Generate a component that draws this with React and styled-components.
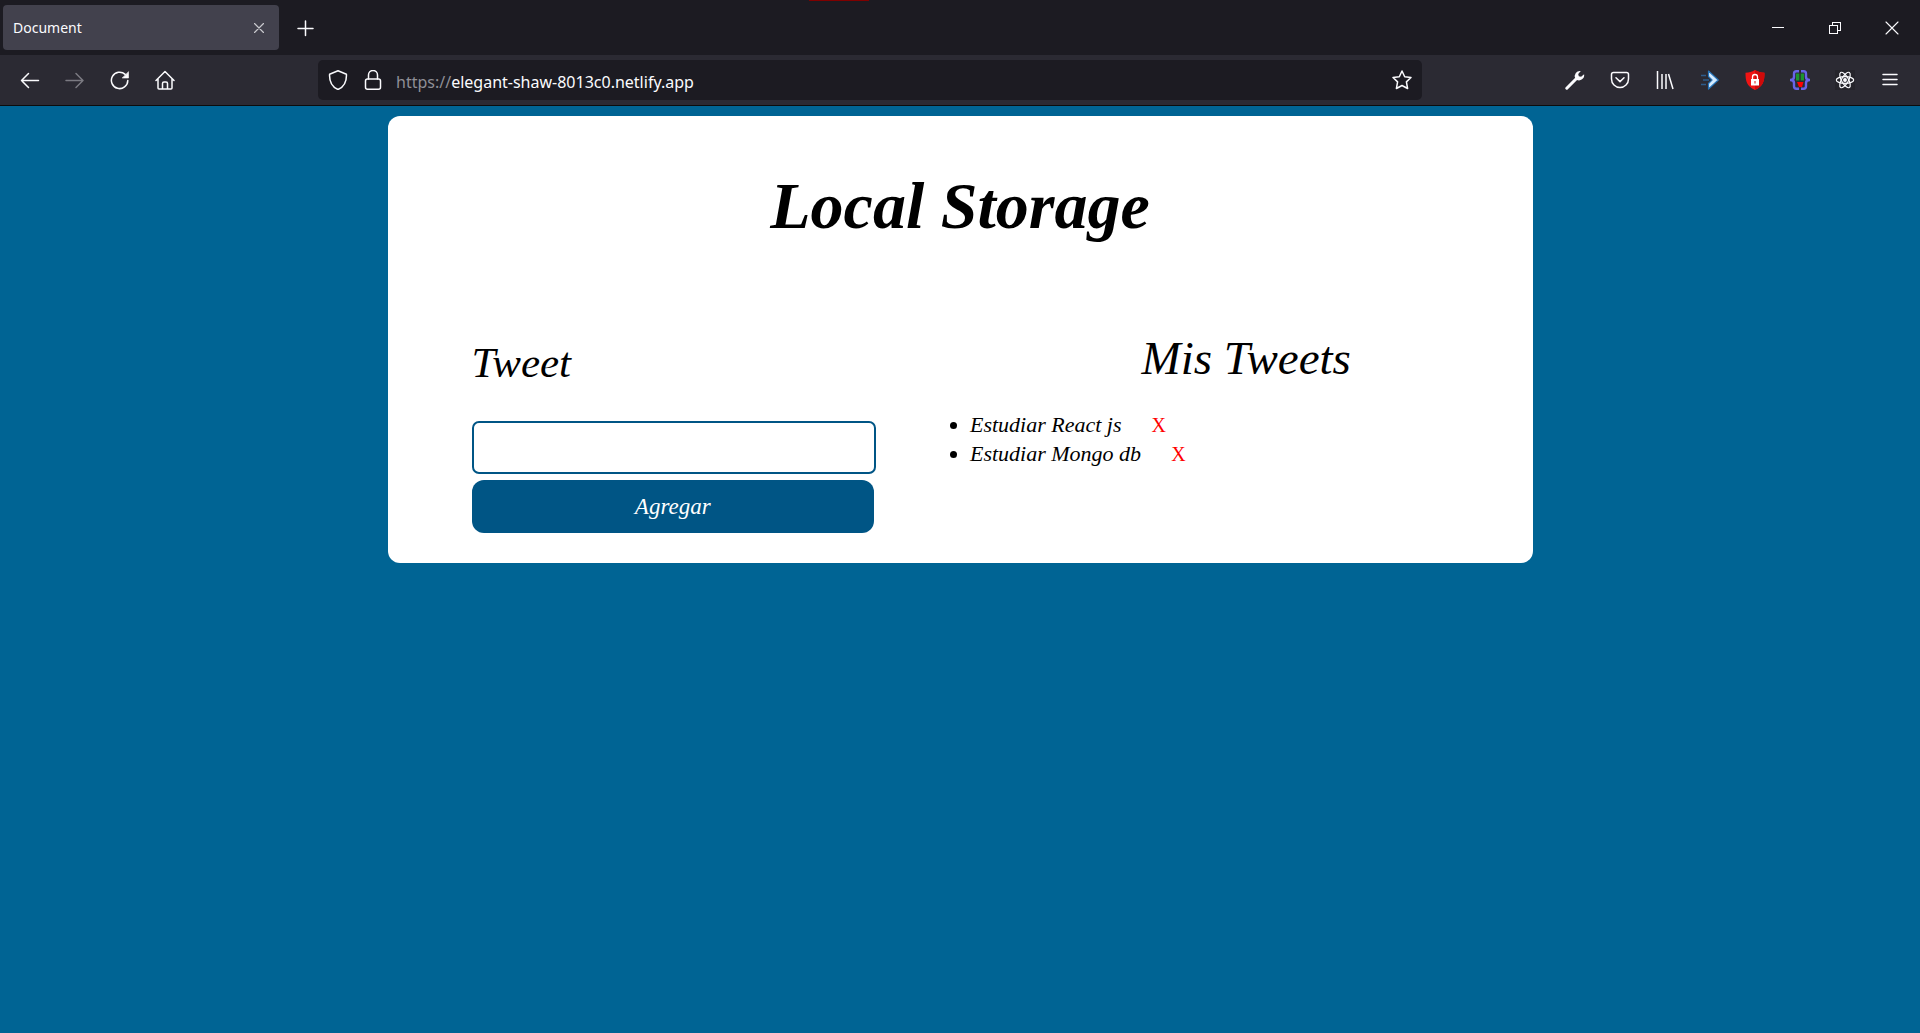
import React, { useState } from "react";
import styled, { createGlobalStyle, css } from "styled-components";

const ui = `"Noto Sans", "Open Sans", sans-serif`;
const serif = `"Liberation Serif", "Times New Roman", serif`;

const GlobalStyle = createGlobalStyle`
  *, *::before, *::after { box-sizing: border-box; }
  body {
    margin: 0;
    background: #006494;
    color: #000;
    font-family: ${serif};
  }
  button, input { font: inherit; }
`;

const Window = styled.div`
  display: flex;
  flex-direction: column;
  min-height: 100vh;
`;

const TitleBar = styled.header`
  position: relative;
  display: flex;
  align-items: flex-start;
  height: 55px;
  padding: 5px 0 5px 3px;
  background: #1c1b22;
  color: #fbfbfe;
  font-family: ${ui};
`;

const RecordingMark = styled.span`
  position: absolute;
  top: 0;
  left: 809px;
  width: 60px;
  height: 1px;
  background: #7f0000;
`;

const Tab = styled.div`
  display: flex;
  align-items: center;
  justify-content: space-between;
  width: 276px;
  height: 45px;
  padding: 0 10px;
  border-radius: 4px;
  background: #42414d;
  font-size: 14px;
`;

const IconButton = styled.button`
  display: flex;
  align-items: center;
  justify-content: center;
  flex: none;
  width: ${(p) => p.$width || 45}px;
  height: ${(p) => p.$height || 45}px;
  padding: 0;
  border: 0;
  background: none;
  color: ${(p) => (p.$dim ? "#7b7a82" : "#fbfbfe")};
`;

const WindowControls = styled.div`
  display: flex;
  margin-left: auto;
`;

const Toolbar = styled.nav`
  display: flex;
  align-items: center;
  justify-content: space-between;
  height: 51px;
  padding: 0 8px 0 7px;
  border-bottom: 1px solid #0c0c0d;
  background: #2b2a33;
  font-family: ${ui};
`;

const ToolGroup = styled.div`
  display: flex;
`;

const AddressBar = styled.div`
  display: flex;
  align-items: center;
  flex: 0 1 1104px;
  height: 40px;
  margin-left: auto;
  margin-right: 130px;
  border-radius: 5px;
  background: #1c1b22;
  color: #fbfbfe;
  font-size: 16px;
`;

const Scheme = styled.label`
  margin-left: 8px;
  padding-top: 3px;
  color: #8f8f96;
`;

const AddressInput = styled.input`
  flex: 1;
  min-width: 0;
  padding: 3px 0 0;
  border: 0;
  outline: 0;
  background: none;
  color: inherit;
`;

const Card = styled.main`
  width: calc(100% - 20px);
  max-width: 1145px;
  margin: 10px auto;
  padding-bottom: 30px;
  border-radius: 12px;
  background: #fff;
  font-style: italic;
`;

const Title = styled.h1`
  margin: 0;
  padding: 50px 0 80px;
  font-size: 66px;
  line-height: 80px;
  text-align: center;
`;

const Columns = styled.div`
  display: grid;
  grid-template-columns: 1fr 1fr;
`;

const heading = css`
  margin: 0;
  font-weight: 400;
  line-height: 50px;
`;

const Form = styled.form`
  display: flex;
  flex-direction: column;
  padding: 12px 84px 0;
`;

const FieldLabel = styled.label`
  ${heading}
  margin-bottom: 33px;
  font-size: 43px;
`;

const fieldBox = css`
  height: 53px;
  font-size: 23px;
  font-style: italic;
`;

const TweetInput = styled.input`
  ${fieldBox}
  padding: 0 12px;
  border: 2px solid #005585;
  border-radius: 7px;
  outline: 0;
  background: #fff;
`;

const SubmitButton = styled.button`
  ${fieldBox}
  margin: 6px 2px 0 0;
  border: 0;
  border-radius: 12px;
  background: #005585;
  color: #fff;
`;

const ListHeading = styled.h2`
  ${heading}
  margin: 7px 0 27px;
  font-size: 47px;
  text-align: center;
`;

const TweetList = styled.ul`
  margin: 0;
  padding-left: 10px;
  font-size: 22px;
  line-height: 29px;
`;

const DeleteButton = styled.button`
  margin-left: 30px;
  padding: 0;
  border: 0;
  background: none;
  color: #f00;
  font-size: 20px;
  font-style: normal;
  line-height: 28px;
`;

function Svg({ size = 20, children, ...rest }) {
  return (
    <svg width={size} height={size} viewBox="0 0 20 20" fill="none" stroke="currentColor"
      strokeWidth="1.5" strokeLinecap="round" strokeLinejoin="round" aria-hidden="true" {...rest}>
      {children}
    </svg>
  );
}

const BackIcon = () => <Svg><path d="M18.5 10.500H1.500M8.500 3.500l-7 7 7 7" /></Svg>;
const ForwardIcon = () => <Svg><path d="M1 10.500H18M11 3.500l7 7-7 7" /></Svg>;
const ReloadIcon = () => (
  <Svg>
    <path d="M17.800 10.500a8.200 8.200 0 1 1-2.600-6.100" />
    <path d="M18.500 2v6h-6z" fill="currentColor" strokeWidth="0.6" />
  </Svg>
);
const HomeIcon = () => (
  <Svg><path d="M1 10.500L10 1.500l9 9M3 9v9q0 1 1 1h12q1 0 1-1V9M7.500 19v-5.500q0-1.500 1.500-1.500h2q1.500 0 1.500 1.500V19" /></Svg>
);
const ShieldIcon = () => <Svg><path d="M10 .800l8.400 3.400c.4 7-2.200 12.500-8.400 15.300C3.800 16.700 1.200 11.200 1.600 4.200z" /></Svg>;
const LockIcon = () => (
  <Svg><rect x="2.500" y="9" width="15" height="10.200" rx="2" /><path d="M5.500 9V5a4.500 4.500 0 0 1 9 0v4" /></Svg>
);
const StarIcon = () => (
  <Svg><path d="M10 1l2.700 5.700 6.300.8-4.600 4.400 1.200 6.600L10 15.500l-5.600 3 1.200-6.600L1 7.500l6.300-.8z" /></Svg>
);
const WrenchIcon = () => (
  <Svg>
    <path d="M1.800 18.200L11 9" strokeWidth="3" />
    <path d="M15.800 1a5.200 5.200 0 0 0-5.500 7.400l1.200 1.300a5.200 5.200 0 0 0 7.600-5.500l-3 2.600-2.300-.6-.6-2.300z" fill="currentColor" stroke="none" />
  </Svg>
);
const PocketIcon = () => (
  <Svg><path d="M3.500 2.500h13q2 0 2 2V9a8.500 8.500 0 0 1-17 0V4.500q0-2 2-2zM6 7.800l4 3.800 4-3.800" /></Svg>
);
const LibraryIcon = () => (
  <Svg strokeLinecap="butt"><path d="M2.500 1v18M7 4v15M11 4v15M13.500 4l4.500 15" /></Svg>
);
const SendIcon = () => (
  <Svg>
    <path d="M1 5.500h5M3 10h6M1 14.500h5" stroke="#2d5c8c" strokeLinecap="butt" />
    <path d="M8.500 1l9.800 9-9.800 9v-5.500l3.500-3.500-3.500-3.500z" fill="#d6ecff" stroke="#2673b8" strokeWidth="1.200" />
  </Svg>
);
const BlockerIcon = () => (
  <Svg stroke="none">
    <path d="M10 0c3 2 6 2.600 9.500 2.700 0 8-1 13.300-9.500 17.300C1.500 16 .5 10.700.5 2.700 4 2.600 7 2 10 0z" fill="#f01414" />
    <path d="M10 0c3 2 6 2.600 9.500 2.700 0 8-1 13.300-9.500 17.300z" fill="#cf0a0a" />
    <rect x="6" y="9" width="8" height="6.500" fill="#fff" />
    <path d="M7.500 9V7a2.500 2.500 0 0 1 5 0v2" stroke="#fff" strokeWidth="1.300" />
    <rect x="9.500" y="11" width="1" height="2.500" fill="#d11" />
  </Svg>
);
const BracesIcon = () => (
  <Svg strokeLinecap="butt">
    <path d="M9 1.200H6.500Q4 1.200 4 3.700V7q0 3-3.500 3Q4 10 4 13v3.300q0 2.500 2.500 2.500H9M11 1.200h2.500q2.500 0 2.500 2.500V7q0 3 3.500 3-3.500 0-3.500 3v3.300q0 2.500-2.500 2.500H11" stroke="#6764e8" strokeWidth="2.400" />
    <path d="M6 3.500h3.300v7H6zM10.700 3.500H14v7h-3.300z" fill="#1c9430" stroke="none" />
    <path d="M7 12h6.500l-1.500 5H9z" fill="#f00" stroke="none" />
  </Svg>
);
const ReactIcon = () => (
  <Svg strokeWidth="1.200">
    <rect width="20" height="20" fill="#25242b" stroke="none" />
    <ellipse cx="10" cy="10" rx="8.700" ry="3.400" />
    <ellipse cx="10" cy="10" rx="8.700" ry="3.400" transform="rotate(60 10 10)" />
    <ellipse cx="10" cy="10" rx="8.700" ry="3.400" transform="rotate(120 10 10)" />
    <circle cx="10" cy="10" r="1.300" fill="currentColor" />
  </Svg>
);
const MenuIcon = () => <Svg><path d="M3 4.500h14M3 9.500h14M3 14.500h14" /></Svg>;
const PlusIcon = () => <Svg><path d="M10.500 3v14.500M3 10.500h15" /></Svg>;
const CloseTabIcon = () => <Svg size={10} stroke="#c9c9ce" strokeWidth="2.400"><path d="M1 1l18 18M19 1L1 19" /></Svg>;
const MinimizeIcon = () => <Svg size={12} shapeRendering="crispEdges" viewBox="0 0 12 12" strokeWidth="1"><path d="M0 5.500h12" /></Svg>;
const RestoreIcon = () => (
  <Svg size={12} viewBox="0 0 12 12" strokeWidth="1" strokeLinejoin="miter" shapeRendering="crispEdges">
    <path d="M.5 3.500h8v8h-8zM3.500 3.500v-3h8v8h-3" />
  </Svg>
);
const CloseIcon = () => <Svg size={14} viewBox="0 0 14 14" strokeWidth="1.100"><path d="M1 1l12 12M13 1L1 13" /></Svg>;

const navigation = [
  { label: "Back", Icon: BackIcon },
  { label: "Forward", Icon: ForwardIcon, dim: true },
  { label: "Reload", Icon: ReloadIcon },
  { label: "Home", Icon: HomeIcon },
];

const extensions = [
  { label: "Developer tools", Icon: WrenchIcon },
  { label: "Pocket", Icon: PocketIcon },
  { label: "Library", Icon: LibraryIcon },
  { label: "Send", Icon: SendIcon },
  { label: "Blocker", Icon: BlockerIcon },
  { label: "Braces", Icon: BracesIcon },
  { label: "React", Icon: ReactIcon },
  { label: "Menu", Icon: MenuIcon },
];

const controls = [
  { label: "Minimize", Icon: MinimizeIcon },
  { label: "Restore", Icon: RestoreIcon },
  { label: "Close", Icon: CloseIcon },
];

function Buttons({ items, width, height }) {
  return items.map(({ label, Icon, dim }) => (
    <IconButton key={label} type="button" aria-label={label} $dim={dim} $width={width} $height={height}>
      <Icon />
    </IconButton>
  ));
}

export default function App() {
  const [tweets, setTweets] = useState(["Estudiar React js", "Estudiar Mongo db"]);
  const [draft, setDraft] = useState("");

  const addTweet = (event) => {
    event.preventDefault();
    if (!draft.trim()) return;
    setTweets([...tweets, draft.trim()]);
    setDraft("");
  };

  return (
    <>
      <GlobalStyle />
      <Window>
        <TitleBar>
          <RecordingMark />
          <Tab>
            <span>Document</span>
            <IconButton type="button" aria-label="Close tab" $width={20}>
              <CloseTabIcon />
            </IconButton>
          </Tab>
          <IconButton type="button" aria-label="New tab" $width={52}>
            <PlusIcon />
          </IconButton>
          <WindowControls>
            <Buttons items={controls} width={57} />
          </WindowControls>
        </TitleBar>
        <Toolbar>
          <ToolGroup>
            <Buttons items={navigation} />
          </ToolGroup>
          <AddressBar>
            <IconButton type="button" aria-label="Tracking protection" $width={40} $height={40}><ShieldIcon /></IconButton>
            <IconButton type="button" aria-label="Connection" $width={30} $height={40}><LockIcon /></IconButton>
            <Scheme htmlFor="address">https://</Scheme>
            <AddressInput id="address" defaultValue="elegant-shaw-8013c0.netlify.app" />
            <IconButton type="button" aria-label="Bookmark" $width={40} $height={40}><StarIcon /></IconButton>
          </AddressBar>
          <ToolGroup>
            <Buttons items={extensions} />
          </ToolGroup>
        </Toolbar>
        <Card>
          <Title>Local Storage</Title>
          <Columns>
            <Form onSubmit={addTweet}>
              <FieldLabel htmlFor="tweet">Tweet</FieldLabel>
              <TweetInput id="tweet" value={draft} onChange={(e) => setDraft(e.target.value)} />
              <SubmitButton type="submit">Agregar</SubmitButton>
            </Form>
            <section>
              <ListHeading>Mis Tweets</ListHeading>
              <TweetList>
                {tweets.map((tweet, index) => (
                  <li key={tweet}>
                    {tweet}
                    <DeleteButton type="button" aria-label={`X ${tweet}`}
                      onClick={() => setTweets(tweets.filter((_, i) => i !== index))}>
                      X
                    </DeleteButton>
                  </li>
                ))}
              </TweetList>
            </section>
          </Columns>
        </Card>
      </Window>
    </>
  );
}
